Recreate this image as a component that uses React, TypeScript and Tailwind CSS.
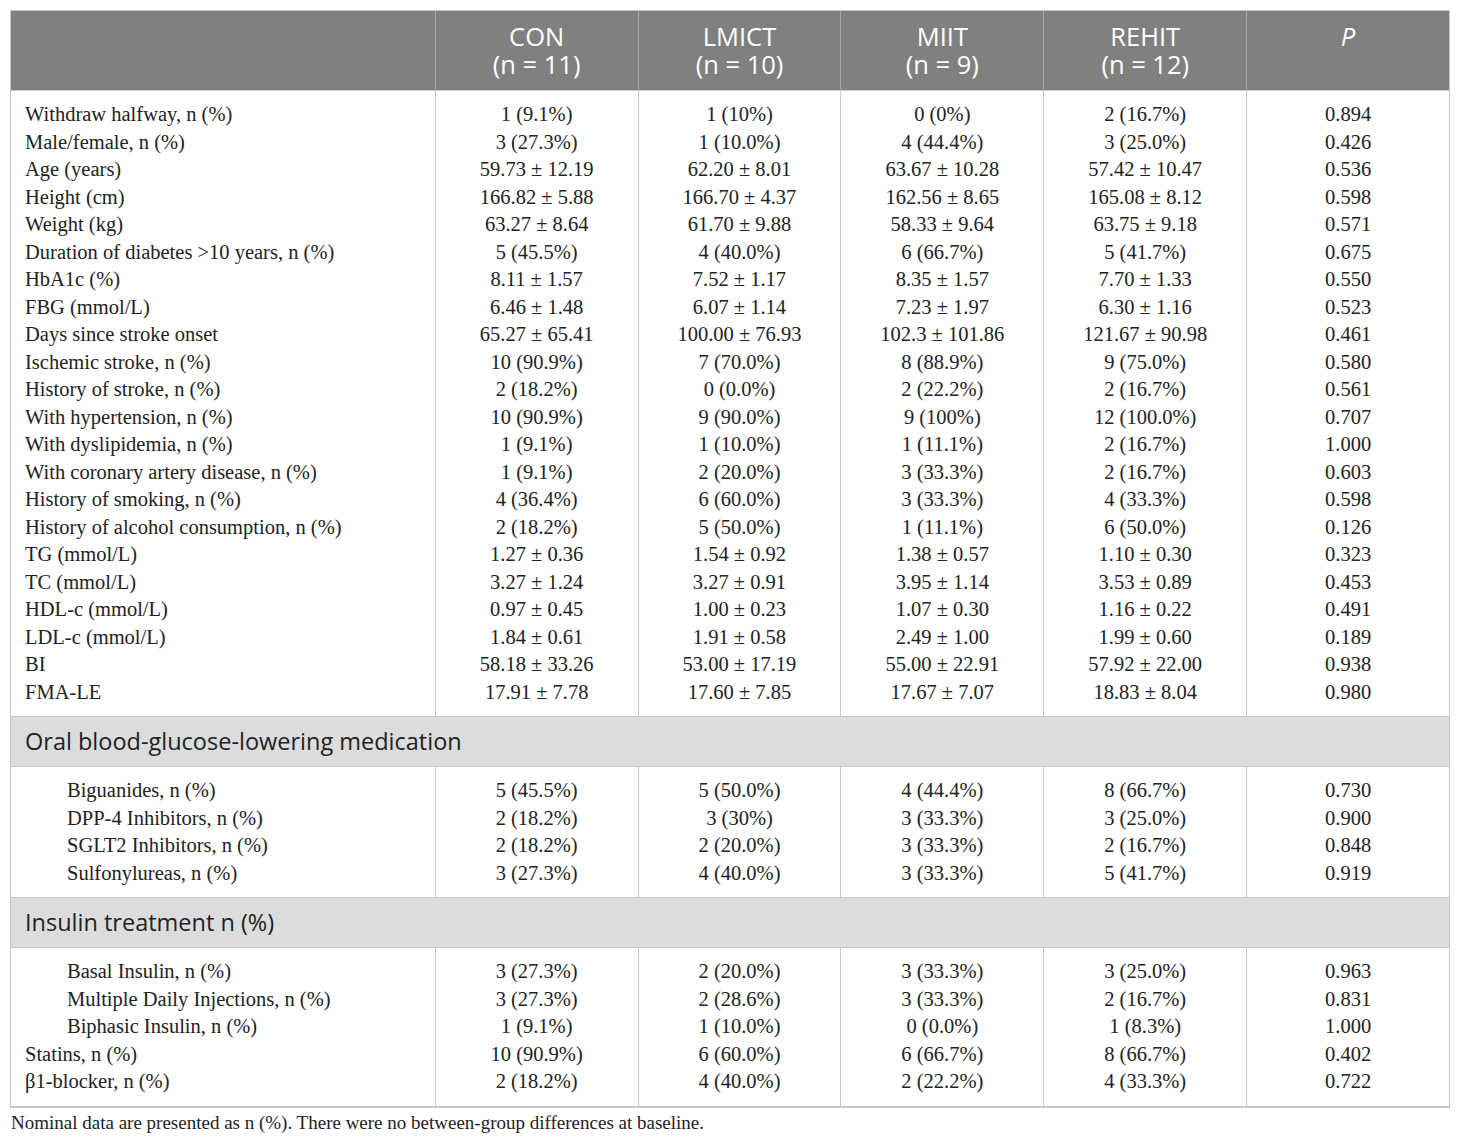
import React from "react";

type Row = { label: string; indent?: boolean; v: string[] };

const block1: Row[] = [
  { label: "Withdraw halfway, n (%)", v: ["1 (9.1%)", "1 (10%)", "0 (0%)", "2 (16.7%)", "0.894"] },
  { label: "Male/female, n (%)", v: ["3 (27.3%)", "1 (10.0%)", "4 (44.4%)", "3 (25.0%)", "0.426"] },
  { label: "Age (years)", v: ["59.73 ± 12.19", "62.20 ± 8.01", "63.67 ± 10.28", "57.42 ± 10.47", "0.536"] },
  { label: "Height (cm)", v: ["166.82 ± 5.88", "166.70 ± 4.37", "162.56 ± 8.65", "165.08 ± 8.12", "0.598"] },
  { label: "Weight (kg)", v: ["63.27 ± 8.64", "61.70 ± 9.88", "58.33 ± 9.64", "63.75 ± 9.18", "0.571"] },
  { label: "Duration of diabetes >10 years, n (%)", v: ["5 (45.5%)", "4 (40.0%)", "6 (66.7%)", "5 (41.7%)", "0.675"] },
  { label: "HbA1c (%)", v: ["8.11 ± 1.57", "7.52 ± 1.17", "8.35 ± 1.57", "7.70 ± 1.33", "0.550"] },
  { label: "FBG (mmol/L)", v: ["6.46 ± 1.48", "6.07 ± 1.14", "7.23 ± 1.97", "6.30 ± 1.16", "0.523"] },
  { label: "Days since stroke onset", v: ["65.27 ± 65.41", "100.00 ± 76.93", "102.3 ± 101.86", "121.67 ± 90.98", "0.461"] },
  { label: "Ischemic stroke, n (%)", v: ["10 (90.9%)", "7 (70.0%)", "8 (88.9%)", "9 (75.0%)", "0.580"] },
  { label: "History of stroke, n (%)", v: ["2 (18.2%)", "0 (0.0%)", "2 (22.2%)", "2 (16.7%)", "0.561"] },
  { label: "With hypertension, n (%)", v: ["10 (90.9%)", "9 (90.0%)", "9 (100%)", "12 (100.0%)", "0.707"] },
  { label: "With dyslipidemia, n (%)", v: ["1 (9.1%)", "1 (10.0%)", "1 (11.1%)", "2 (16.7%)", "1.000"] },
  { label: "With coronary artery disease, n (%)", v: ["1 (9.1%)", "2 (20.0%)", "3 (33.3%)", "2 (16.7%)", "0.603"] },
  { label: "History of smoking, n (%)", v: ["4 (36.4%)", "6 (60.0%)", "3 (33.3%)", "4 (33.3%)", "0.598"] },
  { label: "History of alcohol consumption, n (%)", v: ["2 (18.2%)", "5 (50.0%)", "1 (11.1%)", "6 (50.0%)", "0.126"] },
  { label: "TG (mmol/L)", v: ["1.27 ± 0.36", "1.54 ± 0.92", "1.38 ± 0.57", "1.10 ± 0.30", "0.323"] },
  { label: "TC (mmol/L)", v: ["3.27 ± 1.24", "3.27 ± 0.91", "3.95 ± 1.14", "3.53 ± 0.89", "0.453"] },
  { label: "HDL-c (mmol/L)", v: ["0.97 ± 0.45", "1.00 ± 0.23", "1.07 ± 0.30", "1.16 ± 0.22", "0.491"] },
  { label: "LDL-c (mmol/L)", v: ["1.84 ± 0.61", "1.91 ± 0.58", "2.49 ± 1.00", "1.99 ± 0.60", "0.189"] },
  { label: "BI", v: ["58.18 ± 33.26", "53.00 ± 17.19", "55.00 ± 22.91", "57.92 ± 22.00", "0.938"] },
  { label: "FMA-LE", v: ["17.91 ± 7.78", "17.60 ± 7.85", "17.67 ± 7.07", "18.83 ± 8.04", "0.980"] },
];

const block2: Row[] = [
  { label: "Biguanides, n (%)", indent: true, v: ["5 (45.5%)", "5 (50.0%)", "4 (44.4%)", "8 (66.7%)", "0.730"] },
  { label: "DPP-4 Inhibitors, n (%)", indent: true, v: ["2 (18.2%)", "3 (30%)", "3 (33.3%)", "3 (25.0%)", "0.900"] },
  { label: "SGLT2 Inhibitors, n (%)", indent: true, v: ["2 (18.2%)", "2 (20.0%)", "3 (33.3%)", "2 (16.7%)", "0.848"] },
  { label: "Sulfonylureas, n (%)", indent: true, v: ["3 (27.3%)", "4 (40.0%)", "3 (33.3%)", "5 (41.7%)", "0.919"] },
];

const block3: Row[] = [
  { label: "Basal Insulin, n (%)", indent: true, v: ["3 (27.3%)", "2 (20.0%)", "3 (33.3%)", "3 (25.0%)", "0.963"] },
  { label: "Multiple Daily Injections, n (%)", indent: true, v: ["3 (27.3%)", "2 (28.6%)", "3 (33.3%)", "2 (16.7%)", "0.831"] },
  { label: "Biphasic Insulin, n (%)", indent: true, v: ["1 (9.1%)", "1 (10.0%)", "0 (0.0%)", "1 (8.3%)", "1.000"] },
  { label: "Statins, n (%)", v: ["10 (90.9%)", "6 (60.0%)", "6 (66.7%)", "8 (66.7%)", "0.402"] },
  { label: "β1-blocker, n (%)", v: ["2 (18.2%)", "4 (40.0%)", "2 (22.2%)", "4 (33.3%)", "0.722"] },
];

const serif = "font-['Liberation_Serif','Times_New_Roman',serif]";
const sans = "font-['Open_Sans','Noto_Sans',sans-serif]";

function Block({ rows }: { rows: Row[] }) {
  return (
    <div className={`flex border-b border-[#c8c8c8] ${serif} text-[20.5px] text-[#222]`}>
      <div className="w-[424px] py-[10px]">
        {rows.map((r, i) => (
          <div key={i} className={`h-[27.5px] flex items-center whitespace-nowrap ${r.indent ? "pl-[56px]" : "pl-[14px]"}`}>
            {r.label}
          </div>
        ))}
      </div>
      {[0, 1, 2, 3, 4].map((c) => (
        <div key={c} className="w-[203px] border-l border-[#c8c8c8] py-[10px]">
          {rows.map((r, i) => (
            <div key={i} className="h-[27.5px] flex items-center justify-center whitespace-nowrap">
              {r.v[c]}
            </div>
          ))}
        </div>
      ))}
    </div>
  );
}

function Section({ title }: { title: string }) {
  return (
    <div className={`h-[50px] bg-[#dcdcdc] border-b border-[#c8c8c8] flex items-center pl-[14px] ${sans} text-[23.5px] text-[#222]`}>
      {title}
    </div>
  );
}

export default function App() {
  const heads = [
    ["CON", "(n = 11)"],
    ["LMICT", "(n = 10)"],
    ["MIIT", "(n = 9)"],
    ["REHIT", "(n = 12)"],
  ];
  return (
    <div className="w-[1460px] h-[1144px] bg-white pt-[10px] pl-[10px]">
      <div className="w-[1440px] border border-[#c8c8c8]">
        <div className={`flex bg-[#808080] text-white ${sans} text-[25.5px] leading-[28px] h-[80px] border-b border-[#c8c8c8]`}>
          <div className="w-[424px]" />
          {heads.map((h, i) => (
            <div key={i} className="w-[203px] border-l border-[#a6a6a6] text-center pt-[11px]">
              {h[0]}
              <br />
              {h[1]}
            </div>
          ))}
          <div className="w-[203px] border-l border-[#a6a6a6] text-center pt-[11px]">
            <span className="italic">P</span>
          </div>
        </div>
        <Block rows={block1} />
        <Section title="Oral blood-glucose-lowering medication" />
        <Block rows={block2} />
        <Section title="Insulin treatment n (%)" />
        <Block rows={block3} />
      </div>
      <div className={`${serif} text-[19px] text-[#222] pt-[1px] pl-[1px]`}>
        Nominal data are presented as n (%). There were no between-group differences at baseline.
      </div>
    </div>
  );
}
